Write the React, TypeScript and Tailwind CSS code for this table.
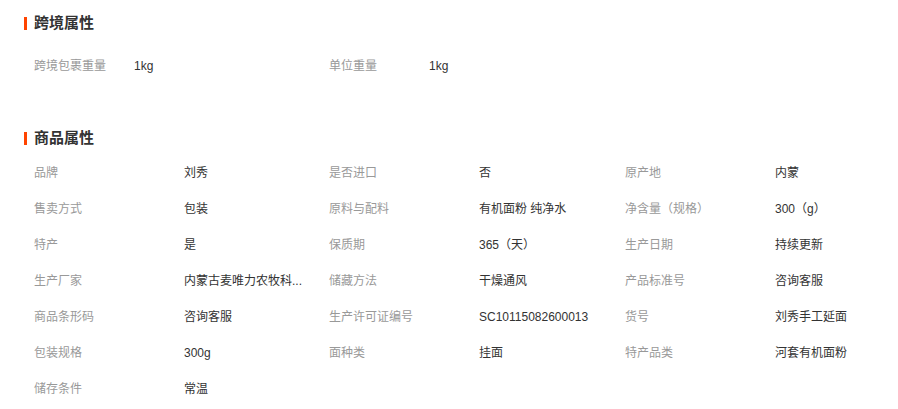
import React from "react";

const font = {
  fontFamily: '"Liberation Sans", "Noto Sans CJK SC", Arial, sans-serif',
};

function Title({ text }: { text: string }) {
  return (
    <div className="flex items-center h-[20px] pl-[24px]">
      <span className="w-[3px] h-[13px] bg-[#ff4400]" />
      <span className="ml-[7px] text-[15px] font-bold text-[#333] leading-[20px]">{text}</span>
    </div>
  );
}

const cross: [string, string][] = [
  ["跨境包裹重量", "1kg"],
  ["单位重量", "1kg"],
];

const attrs: [string, string][] = [
  ["品牌", "刘秀"],
  ["是否进口", "否"],
  ["原产地", "内蒙"],
  ["售卖方式", "包装"],
  ["原料与配料", "有机面粉 纯净水"],
  ["净含量（规格）", "300（g）"],
  ["特产", "是"],
  ["保质期", "365（天）"],
  ["生产日期", "持续更新"],
  ["生产厂家", "内蒙古麦唯力农牧科..."],
  ["储藏方法", "干燥通风"],
  ["产品标准号", "咨询客服"],
  ["商品条形码", "咨询客服"],
  ["生产许可证编号", "SC10115082600013"],
  ["货号", "刘秀手工延面"],
  ["包装规格", "300g"],
  ["面种类", "挂面"],
  ["特产品类", "河套有机面粉"],
  ["储存条件", "常温"],
];

export default function App() {
  return (
    <div className="w-[898px] h-[409px] bg-white overflow-hidden pt-[13px]" style={font}>
      <Title text="跨境属性" />
      <div className="grid grid-cols-[295px_296px_1fr] pl-[34px] mt-[15px]">
        {cross.map(([k, v]) => (
          <div key={k} className="flex items-center h-[36px] text-[12px]">
            <span className="w-[100px] text-[#999]">{k}</span>
            <span className="text-[#333]">{v}</span>
          </div>
        ))}
      </div>
      <div className="mt-[44px]">
        <Title text="商品属性" />
      </div>
      <div className="grid grid-cols-[295px_296px_1fr] pl-[34px] mt-[7px]">
        {attrs.map(([k, v]) => (
          <div key={k} className="flex items-center h-[36px] text-[12px]">
            <span className="w-[150px] shrink-0 text-[#999]">{k}</span>
            <span className="whitespace-nowrap text-[#333]">{v}</span>
          </div>
        ))}
      </div>
    </div>
  );
}
